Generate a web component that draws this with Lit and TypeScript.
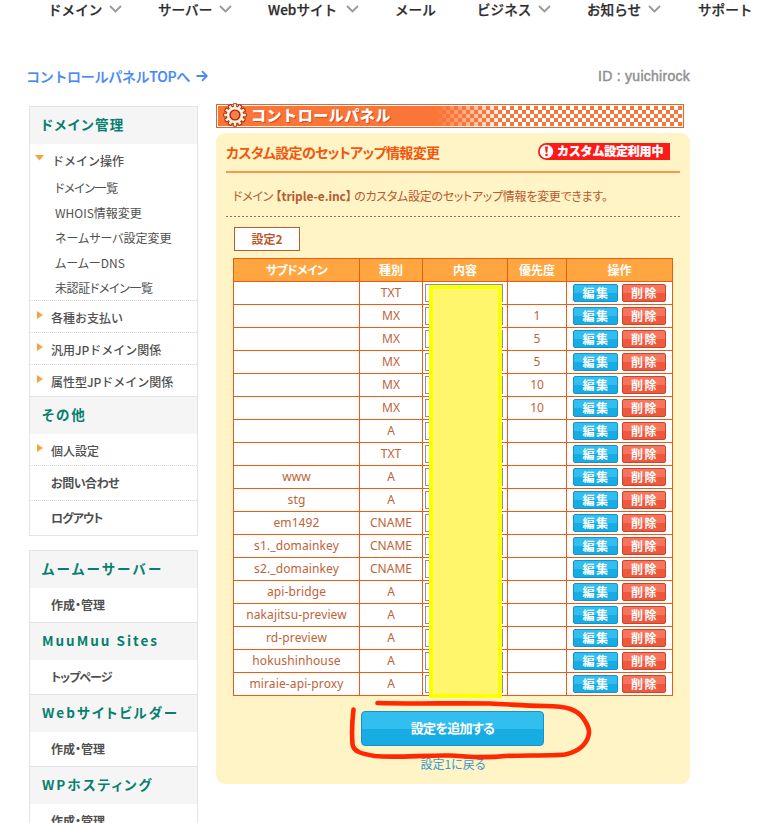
import { LitElement, html, css, svg, nothing } from "lit";
import { customElement } from "lit/decorators.js";

interface DnsRecord {
  sub: string;
  type: string;
  prio: string;
}

const rec = (sub: string, type: string, prio = ""): DnsRecord => ({ sub, type, prio });

const RECORDS: DnsRecord[] = [
  rec("", "TXT"),
  rec("", "MX", "1"),
  rec("", "MX", "5"),
  rec("", "MX", "5"),
  rec("", "MX", "10"),
  rec("", "MX", "10"),
  rec("", "A"),
  rec("", "TXT"),
  rec("www", "A"),
  rec("stg", "A"),
  rec("em1492", "CNAME"),
  rec("s1._domainkey", "CNAME"),
  rec("s2._domainkey", "CNAME"),
  rec("api-bridge", "A"),
  rec("nakajitsu-preview", "A"),
  rec("rd-preview", "A"),
  rec("hokushinhouse", "A"),
  rec("miraie-api-proxy", "A"),
];

const NAV: [string, boolean][] = [
  ["ドメイン", true],
  ["サーバー", true],
  ["Webサイト", true],
  ["メール", false],
  ["ビジネス", true],
  ["お知らせ", true],
  ["サポート", false],
];

@customElement("top-nav")
export class TopNav extends LitElement {
  static styles = css`
    :host {
      display: grid;
      grid-template-columns: 110px 110px 127px 82px 110px 111px 60px;
      height: 20px;
      padding-left: 48px;
      font-size: 13.6px;
      font-weight: 500;
      color: #2c2c2c;
      -webkit-text-stroke: 0.25px #2c2c2c;
      white-space: nowrap;
    }
    .item {
      display: flex;
      align-items: center;
      height: 18px;
      gap: 7px;
    }
    .item.web {
      gap: 9px;
    }
    svg {
      width: 13px;
      height: 8px;
    }
  `;
  render() {
    return NAV.map(
      ([label, arrow]) => html`<div class="item ${label.startsWith("Web") ? "web" : ""}">
        <span>${label}</span>
        ${arrow
          ? html`<svg viewBox="0 0 13 8"><path d="M1 1 L6.5 6.5 L12 1" fill="none" stroke="#999" stroke-width="1.8" /></svg>`
          : nothing}
      </div>`
    );
  }
}

@customElement("side-menu")
export class SideMenu extends LitElement {
  static styles = css`
    :host {
      display: flex;
      flex-direction: column;
      gap: 14px;
      width: 169px;
      flex: none;
      color: #505050;
      font-size: 12px;
      white-space: nowrap;
    }
    .box {
      border: 1px solid #e3e3e3;
    }
    .head {
      height: 37px;
      line-height: 35px;
      padding-left: 12px;
      background: #f5f5f5;
      color: #067f6e;
      font-size: 13.5px;
      font-weight: 700;
      letter-spacing: 2px;
      font-feature-settings: "palt";
    }
    .head.first {
      letter-spacing: 1.4px;
      padding-left: 11px;
    }
    .head.kana {
      letter-spacing: 2.4px;
    }
    .head.next {
      border-top: 1px solid #e3e3e3;
    }
    .group {
      display: flex;
      height: 31px;
      line-height: 33px;
      padding-left: 5px;
      font-weight: 500;
      border-bottom: 1px dotted #d8d8d8;
    }
    .group.last,
    .group.open {
      border-bottom: 0;
    }
    .group.open {
      height: 32px;
    }
    .mark {
      width: 16px;
      height: 24px;
      flex: none;
      padding-top: 9px;
      box-sizing: border-box;
      line-height: 0;
    }
    .mark svg {
      width: 9px;
      height: 10px;
      display: block;
    }
    .group.open .mark {
      width: 17px;
    }
    .subs {
      padding-left: 25px;
      border-bottom: 1px dotted #d8d8d8;
      height: 124px;
      font-feature-settings: "palt";
    }
    .sub {
      height: 25px;
      line-height: 24px;
    }
    .sub.tight {
      letter-spacing: -0.4px;
    }
    .link {
      height: 34px;
      line-height: 33px;
      padding-left: 21px;
      font-weight: 700;
      letter-spacing: -0.45px;
      font-feature-settings: "palt";
    }
    .link.narrow {
      letter-spacing: -0.95px;
    }
    .link.wide {
      letter-spacing: 0;
    }
    .link.dots {
      border-bottom: 1px dotted #d8d8d8;
    }
  `;
  private group(label: string, last = false) {
    return html`<div class="group ${last ? "last" : ""}">
      <span class="mark"><svg viewBox="0 0 9 10"><path d="M2 1 L8 5 L2 9 Z" fill="#f7a53b" /></svg></span>${label}
    </div>`;
  }
  render() {
    return html`
      <div class="box">
        <div class="head first">ドメイン管理</div>
        <div class="group open">
          <span class="mark"><svg viewBox="0 0 9 10"><path d="M0 2 H9 L4.5 7.5 Z" fill="#f7a53b" /></svg></span>ドメイン操作
        </div>
        <div class="subs">
          <div class="sub tight">ドメイン一覧</div>
          <div class="sub">WHOIS情報変更</div>
          <div class="sub">ネームサーバ設定変更</div>
          <div class="sub">ムームーDNS</div>
          <div class="sub tight">未認証ドメイン一覧</div>
        </div>
        ${this.group("各種お支払い")} ${this.group("汎用JPドメイン関係")} ${this.group("属性型JPドメイン関係", true)}
        <div class="head next">その他</div>
        ${this.group("個人設定")}
        <div class="link dots">お問い合わせ</div>
        <div class="link narrow">ログアウト</div>
      </div>
      <div class="box">
        <div class="head kana">ムームーサーバー</div>
        <div class="link wide">作成・管理</div>
        <div class="head next">MuuMuu Sites</div>
        <div class="link narrow">トップページ</div>
        <div class="head next">Webサイトビルダー</div>
        <div class="link wide">作成・管理</div>
        <div class="head next">WPホスティング</div>
        <div class="link wide">作成・管理</div>
      </div>
    `;
  }
}

@customElement("title-bar")
export class TitleBar extends LitElement {
  static styles = css`
    :host {
      display: flex;
      width: 468px;
      height: 24px;
      box-sizing: border-box;
      border: 1px solid #e8632a;
      padding: 1px;
    }
    .fill {
      flex: 1;
      display: flex;
      align-items: center;
      background: linear-gradient(90deg, #fa7538 218px, rgba(250, 117, 56, 0) 288px),
        repeating-conic-gradient(#fa7538 0 25%, #fff 0 50%) 0 0 / 8px 8px;
    }
    svg {
      width: 26px;
      height: 26px;
      margin: -5px 3px -2px 4px;
      flex: none;
    }
    .text {
      color: #fff;
      font-size: 15px;
      line-height: 20px;
      margin-top: -2px;
      font-weight: 900;
      letter-spacing: 0.55px;
      text-shadow: 1px 1px 0 #d9481a;
    }
  `;
  render() {
    const teeth = Array.from({ length: 12 }, (_, i) => i * 30);
    return html`<div class="fill">
      <svg viewBox="-13 -13 26 26">
        ${teeth.map(
          (a) => svg`<rect x="-1.7" y="-11.2" width="3.4" height="5" rx="0.6" fill="#fff0dc" stroke="#a02c10" stroke-width="1.1" transform="rotate(${a})" />`
        )}
        <circle r="8.8" fill="#ffe3c8" stroke="#a02c10" stroke-width="1" />
        ${teeth.map((a) => svg`<rect x="-1.2" y="-10.4" width="2.4" height="5" fill="#fff0dc" transform="rotate(${a})" />`)}
        <circle r="4.9" fill="#f9804a" stroke="#a02c10" stroke-width="1.4" />
      </svg>
      <span class="text">コントロールパネル</span>
    </div>`;
  }
}

@customElement("record-table")
export class RecordTable extends LitElement {
  static styles = css`
    :host {
      display: block;
      position: relative;
      width: 440px;
      color: #bf6238;
      font-size: 12px;
    }
    .grid {
      display: grid;
      grid-template-columns: 125px 62px 84px 58px 105px;
      grid-auto-rows: 22px;
      gap: 1px;
      padding: 1px;
      background: #ee5a12;
    }
    .cell {
      display: flex;
      align-items: center;
      justify-content: center;
      background: #fff;
      line-height: 20px;
      font-family: "Noto Sans", "Noto Sans CJK JP", sans-serif;
      white-space: nowrap;
    }
    .sub {
      letter-spacing: 0.12px;
    }
    .th {
      background: #ffa640;
      color: #fff;
      font-weight: 700;
      font-family: "Noto Sans CJK JP", sans-serif;
      font-feature-settings: "palt";
    }
    .th.first {
      letter-spacing: -0.7px;
    }
    .value {
      justify-content: flex-start;
      padding-left: 2px;
    }
    .field {
      width: 76px;
      height: 16px;
      border: 1px solid #7594c0;
    }
    .ops {
      gap: 4px;
    }
    .btn {
      box-sizing: border-box;
      width: 45px;
      height: 18px;
      border: 1px solid #1494cf;
      border-radius: 2px;
      background: linear-gradient(#32beef 50%, #18ace4 50%);
      color: #fff;
      font: 700 12px/15px "Noto Sans CJK JP", sans-serif;
      letter-spacing: 1.5px;
      text-align: center;
      text-indent: 1px;
    }
    .btn.del {
      width: 44px;
      border-color: #c9452f;
      background: linear-gradient(#f7755c 50%, #ef583c 50%);
    }
    .mask {
      position: absolute;
      left: 195.7px;
      top: 27px;
      width: 73.6px;
      height: 413px;
      box-sizing: border-box;
      border: 4.6px solid #ffff00;
      background: #fff66b;
    }
  `;
  render() {
    return html`
      <div class="grid">
        ${["サブドメイン", "種別", "内容", "優先度", "操作"].map(
          (h, i) => html`<div class="cell th ${i === 0 ? "first" : ""}">${h}</div>`
        )}
        ${RECORDS.map(
          (r) => html`
            <div class="cell sub">${r.sub}</div>
            <div class="cell">${r.type}</div>
            <div class="cell value"><div class="field"></div></div>
            <div class="cell">${r.prio}</div>
            <div class="cell ops"><div class="btn">編集</div><div class="btn del">削除</div></div>
          `
        )}
      </div>
      <div class="mask"></div>
    `;
  }
}

@customElement("app-root")
export class AppRoot extends LitElement {
  static styles = css`
    :host {
      display: block;
      width: 757px;
      height: 823px;
      overflow: hidden;
      background: #fff;
      font-family: "Noto Sans CJK JP", sans-serif;
    }
    .bar {
      display: flex;
      justify-content: space-between;
      height: 84px;
      box-sizing: border-box;
      padding: 46px 67px 0 26px;
      line-height: 20px;
      font-size: 14px;
      white-space: nowrap;
    }
    .top {
      display: flex;
      align-items: center;
      gap: 6px;
      height: 20px;
      color: #4489f7;
      font-weight: 500;
      letter-spacing: -0.3px;
      -webkit-text-stroke: 0.2px #4489f7;
    }
    .top span {
      margin-top: -1px;
    }
    .top svg {
      width: 12px;
      height: 12px;
    }
    .id {
      font-family: "Liberation Sans", Arial, sans-serif;
      color: #909090;
      letter-spacing: 0.27px;
      -webkit-text-stroke: 0.45px #909090;
    }
    .main {
      display: flex;
      gap: 18px;
      padding-left: 29px;
    }
    side-menu {
      padding-top: 2px;
    }
    .panel {
      position: relative;
      width: 474px;
      height: 651px;
      margin-top: 5px;
      box-sizing: border-box;
      padding: 0 10px;
      border-radius: 9px;
      background: #fff4c6;
      white-space: nowrap;
    }
    .heading {
      display: flex;
      justify-content: space-between;
      align-items: center;
      height: 38px;
      padding-right: 10px;
      border-bottom: 2px solid #ff974d;
      color: #f1570d;
      font-size: 14px;
      font-weight: 700;
    }
    .title {
      font-feature-settings: "palt";
      letter-spacing: -0.64px;
      line-height: 20px;
    }
    .badge {
      display: flex;
      align-items: center;
      gap: 3px;
      width: 132px;
      height: 17px;
      box-sizing: border-box;
      padding-left: 1px;
      margin-top: -2px;
      border-radius: 9px 0 0 9px;
      background: #ff1a1a;
      color: #fff;
      font-size: 12px;
      font-weight: 900;
    }
    .badge svg {
      width: 15px;
      height: 15px;
    }
    .badge span {
      letter-spacing: -0.2px;
      line-height: 17px;
      margin-top: -2px;
      -webkit-text-stroke: 0.2px #fff;
    }
    .desc {
      height: 43px;
      line-height: 46px;
      padding-left: 7px;
      color: #b9592d;
      font-size: 12px;
      letter-spacing: -0.27px;
      font-feature-settings: "palt";
    }
    .desc b {
      letter-spacing: -0.1px;
    }
    .rule {
      height: 1px;
      background: repeating-linear-gradient(90deg, #777 0 2px, transparent 2px 4px);
    }
    .tab {
      width: 66px;
      height: 24px;
      box-sizing: border-box;
      margin: 10px 0 7px 8px;
      border: 1px solid #bb5c30;
      background: #fff;
      color: #bb5c30;
      font-size: 12px;
      font-weight: 700;
      line-height: 21px;
      text-align: center;
    }
    record-table {
      margin-left: 7px;
    }
    .add {
      width: 183px;
      height: 35px;
      box-sizing: border-box;
      margin: 15px 0 0 135px;
      border: 1px solid #1494cf;
      border-radius: 4px;
      background: linear-gradient(#32beef 50%, #18ace4 50%);
      color: #fff;
      font-size: 13px;
      font-weight: 700;
      font-feature-settings: "palt";
      letter-spacing: -0.65px;
      line-height: 31px;
      text-align: center;
    }
    .back {
      margin-top: 8px;
      color: #3c96c6;
      font-size: 12px;
      line-height: 20px;
      text-align: center;
      font-feature-settings: "palt";
    }
    .stroke {
      position: absolute;
      left: 130px;
      top: 562px;
      width: 250px;
      height: 70px;
    }
  `;
  render() {
    return html`
      <top-nav></top-nav>
      <div class="bar">
        <div class="top">
          <span>コントロールパネルTOPへ</span>
          <svg viewBox="0 0 12 12"><path d="M0.5 6 H10.5 M6 1.2 L10.8 6 L6 10.8" fill="none" stroke="#4489f7" stroke-width="1.8" /></svg>
        </div>
        <div class="id">ID : yuichirock</div>
      </div>
      <div class="main">
        <side-menu></side-menu>
        <div>
          <title-bar></title-bar>
          <div class="panel">
            <div class="heading">
              <span class="title">カスタム設定のセットアップ情報変更</span>
              <div class="badge">
                <svg viewBox="0 0 15 15">
                  <circle cx="7.5" cy="7.5" r="6.7" fill="#fff" />
                  <path d="M6 2.6 H9 L8.3 8.8 H6.7 Z" fill="#ff1a1a" />
                  <circle cx="7.5" cy="11" r="1.3" fill="#ff1a1a" />
                </svg>
                <span>カスタム設定利用中</span>
              </div>
            </div>
            <div class="desc">ドメイン <b>【triple-e.inc】</b> のカスタム設定のセットアップ情報を変更できます。</div>
            <div class="rule"></div>
            <div class="tab">設定2</div>
            <record-table></record-table>
            <div class="add">設定を追加する</div>
            <div class="back">設定1に戻る</div>
            <svg class="stroke" viewBox="346 695 250 70">
              <path
                d="M377.5 703 C410 704 450 703 490 703.5 C510 704 520 706 545 706 C568 706 577 710 583 718 C587 724 589.5 728 589 733 C588 742 581 751 565 754.5 C550 756 520 755 505 756 C480 759 465 756 450 755.5 C425 755 395 758 375 756 C363 754 353 752 352.5 744 C351.5 731 352 722 353.5 709.5"
                fill="none" stroke="#ff2800" stroke-width="4.6" stroke-linecap="round" stroke-linejoin="round" />
            </svg>
          </div>
        </div>
      </div>
    `;
  }
}
